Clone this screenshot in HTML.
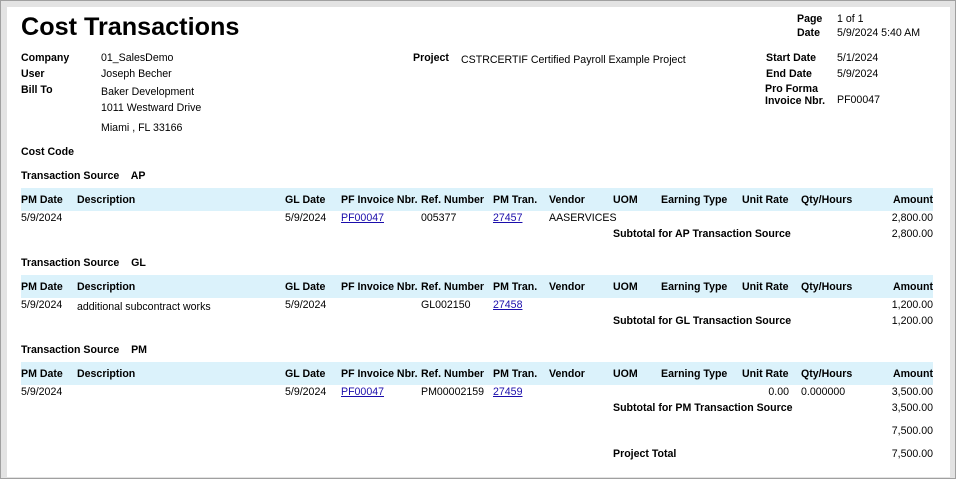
<!DOCTYPE html>
<html><head><meta charset="utf-8"><style>
html,body{margin:0;padding:0}
body{width:956px;height:479px;background:#e3e3e3;position:relative;overflow:hidden;font-family:"Liberation Sans",Arial,sans-serif;font-size:10.6px;color:#000}
.frame{position:absolute;left:0;top:0;width:954px;height:477px;border:1px solid #a0a0a0;background:#e3e3e3}
.page{position:absolute;left:7px;top:7px;width:943px;height:470px;background:#fff}
.t{position:absolute;line-height:14px;white-space:nowrap}
.b{font-weight:bold}
.r{text-align:right}
a{color:#1a0dab;text-decoration:underline}
.bar{position:absolute;left:21px;width:912px;height:23px;background:#dbf2fb}
</style></head><body>
<div class="frame"></div>
<div class="page"></div>
<div class="t b" style="left:21px;top:12px;font-size:25.2px;line-height:30px">Cost Transactions</div>

<div class="t b" style="left:797px;top:12px">Page</div>
<div class="t" style="left:837px;top:12px">1 of 1</div>
<div class="t b" style="left:797px;top:26px">Date</div>
<div class="t" style="left:837px;top:26px">5/9/2024 5:40 AM</div>

<div class="t b" style="left:21px;top:51px">Company</div>
<div class="t" style="left:101px;top:51px">01_SalesDemo</div>
<div class="t b" style="left:21px;top:67px">User</div>
<div class="t" style="left:101px;top:67px">Joseph Becher</div>
<div class="t b" style="left:21px;top:83px">Bill To</div>
<div class="t" style="left:101px;top:85px">Baker Development</div>
<div class="t" style="left:101px;top:101px">1011 Westward Drive</div>
<div class="t" style="left:101px;top:121px">Miami , FL 33166</div>

<div class="t b" style="left:413px;top:51px">Project</div>
<div class="t" style="left:461px;top:53px">CSTRCERTIF Certified Payroll Example Project</div>

<div class="t b" style="left:766px;top:51px">Start Date</div>
<div class="t" style="left:837px;top:51px">5/1/2024</div>
<div class="t b" style="left:766px;top:67px">End Date</div>
<div class="t" style="left:837px;top:67px">5/9/2024</div>
<div class="t b" style="left:765px;top:83px;line-height:12px">Pro Forma<br>Invoice Nbr.</div>
<div class="t" style="left:837px;top:93px">PF00047</div>

<div class="t b" style="left:21px;top:145px">Cost Code</div>

<!-- AP -->
<div class="t b" style="left:21px;top:169px">Transaction Source &nbsp;&nbsp; AP</div>
<div class="bar" style="top:188px"></div>
<div class="t b" style="left:21px;top:193px">PM Date</div>
<div class="t b" style="left:77px;top:193px">Description</div>
<div class="t b" style="left:285px;top:193px">GL Date</div>
<div class="t b" style="left:341px;top:193px">PF Invoice Nbr.</div>
<div class="t b" style="left:421px;top:193px">Ref. Number</div>
<div class="t b" style="left:493px;top:193px">PM Tran.</div>
<div class="t b" style="left:549px;top:193px">Vendor</div>
<div class="t b" style="left:613px;top:193px">UOM</div>
<div class="t b" style="left:661px;top:193px">Earning Type</div>
<div class="t b" style="left:742px;top:193px">Unit Rate</div>
<div class="t b" style="left:801px;top:193px">Qty/Hours</div>
<div class="t b r" style="left:833px;width:100px;top:193px">Amount</div>
<div class="t" style="left:21px;top:211px">5/9/2024</div>
<div class="t" style="left:285px;top:211px">5/9/2024</div>
<div class="t" style="left:341px;top:211px"><a>PF00047</a></div>
<div class="t" style="left:421px;top:211px">005377</div>
<div class="t" style="left:493px;top:211px"><a>27457</a></div>
<div class="t" style="left:549px;top:211px">AASERVICES</div>
<div class="t r" style="left:833px;width:100px;top:211px">2,800.00</div>
<div class="t b" style="left:613px;top:227px">Subtotal for AP Transaction Source</div>
<div class="t r" style="left:833px;width:100px;top:227px">2,800.00</div>

<!-- GL -->
<div class="t b" style="left:21px;top:256px">Transaction Source &nbsp;&nbsp; GL</div>
<div class="bar" style="top:275px"></div>
<div class="t b" style="left:21px;top:280px">PM Date</div>
<div class="t b" style="left:77px;top:280px">Description</div>
<div class="t b" style="left:285px;top:280px">GL Date</div>
<div class="t b" style="left:341px;top:280px">PF Invoice Nbr.</div>
<div class="t b" style="left:421px;top:280px">Ref. Number</div>
<div class="t b" style="left:493px;top:280px">PM Tran.</div>
<div class="t b" style="left:549px;top:280px">Vendor</div>
<div class="t b" style="left:613px;top:280px">UOM</div>
<div class="t b" style="left:661px;top:280px">Earning Type</div>
<div class="t b" style="left:742px;top:280px">Unit Rate</div>
<div class="t b" style="left:801px;top:280px">Qty/Hours</div>
<div class="t b r" style="left:833px;width:100px;top:280px">Amount</div>
<div class="t" style="left:21px;top:298px">5/9/2024</div>
<div class="t" style="left:77px;top:300px">additional subcontract works</div>
<div class="t" style="left:285px;top:298px">5/9/2024</div>
<div class="t" style="left:421px;top:298px">GL002150</div>
<div class="t" style="left:493px;top:298px"><a>27458</a></div>
<div class="t r" style="left:833px;width:100px;top:298px">1,200.00</div>
<div class="t b" style="left:613px;top:314px">Subtotal for GL Transaction Source</div>
<div class="t r" style="left:833px;width:100px;top:314px">1,200.00</div>

<!-- PM -->
<div class="t b" style="left:21px;top:343px">Transaction Source &nbsp;&nbsp; PM</div>
<div class="bar" style="top:362px"></div>
<div class="t b" style="left:21px;top:367px">PM Date</div>
<div class="t b" style="left:77px;top:367px">Description</div>
<div class="t b" style="left:285px;top:367px">GL Date</div>
<div class="t b" style="left:341px;top:367px">PF Invoice Nbr.</div>
<div class="t b" style="left:421px;top:367px">Ref. Number</div>
<div class="t b" style="left:493px;top:367px">PM Tran.</div>
<div class="t b" style="left:549px;top:367px">Vendor</div>
<div class="t b" style="left:613px;top:367px">UOM</div>
<div class="t b" style="left:661px;top:367px">Earning Type</div>
<div class="t b" style="left:742px;top:367px">Unit Rate</div>
<div class="t b" style="left:801px;top:367px">Qty/Hours</div>
<div class="t b r" style="left:833px;width:100px;top:367px">Amount</div>
<div class="t" style="left:21px;top:385px">5/9/2024</div>
<div class="t" style="left:285px;top:385px">5/9/2024</div>
<div class="t" style="left:341px;top:385px"><a>PF00047</a></div>
<div class="t" style="left:421px;top:385px">PM00002159</div>
<div class="t" style="left:493px;top:385px"><a>27459</a></div>
<div class="t r" style="left:689px;width:100px;top:385px">0.00</div>
<div class="t" style="left:801px;top:385px">0.000000</div>
<div class="t r" style="left:833px;width:100px;top:385px">3,500.00</div>
<div class="t b" style="left:613px;top:401px">Subtotal for PM Transaction Source</div>
<div class="t r" style="left:833px;width:100px;top:401px">3,500.00</div>

<div class="t r" style="left:833px;width:100px;top:424px">7,500.00</div>
<div class="t b" style="left:613px;top:447px">Project Total</div>
<div class="t r" style="left:833px;width:100px;top:447px">7,500.00</div>
</body></html>
